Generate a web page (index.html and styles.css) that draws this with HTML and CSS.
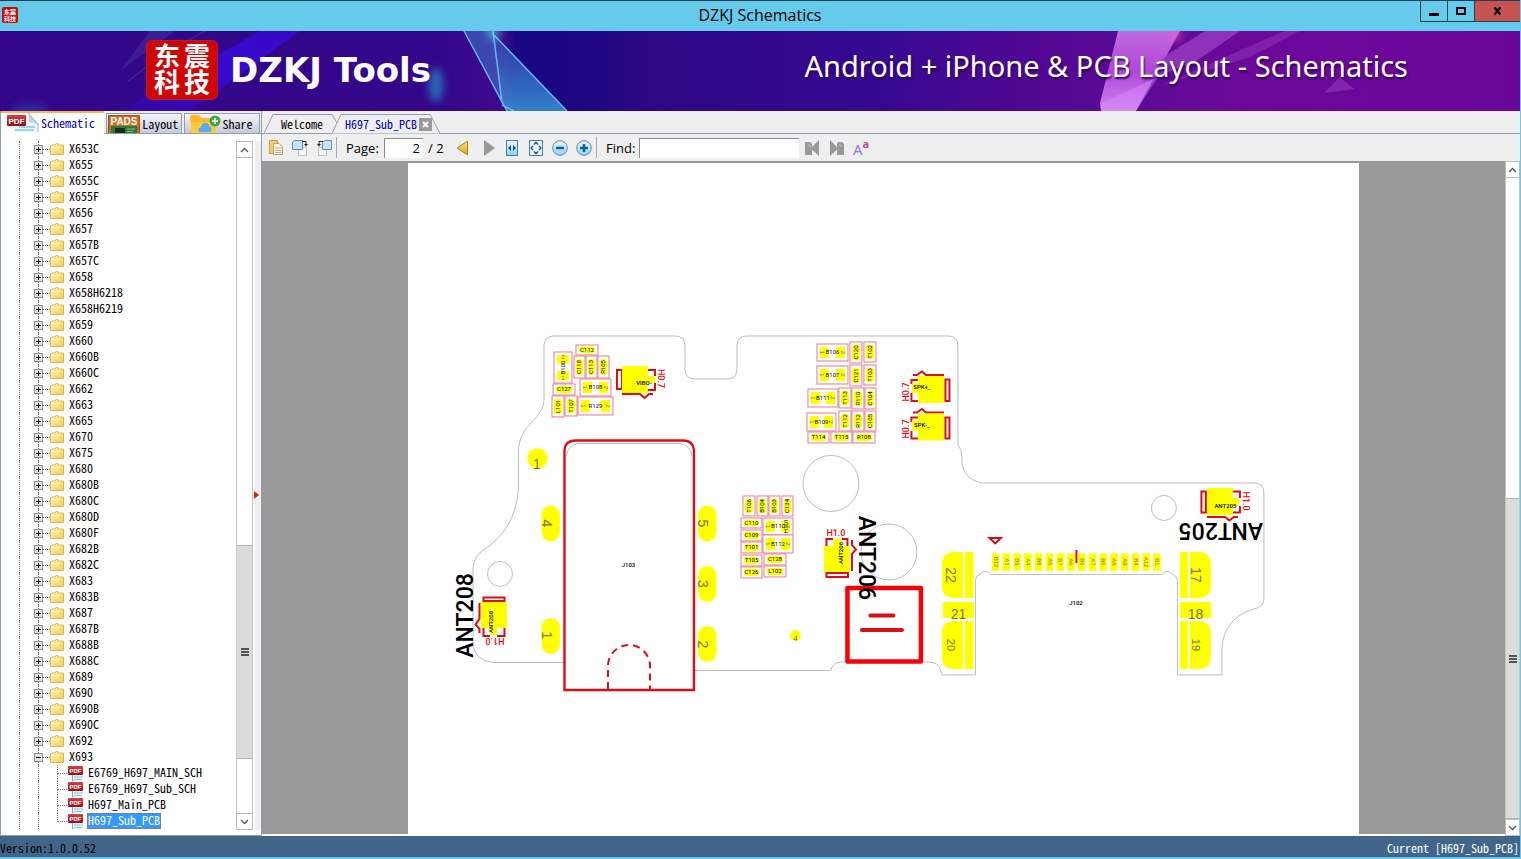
FILE: index.html
```html
<!DOCTYPE html>
<html lang="en">
<head>
<meta charset="utf-8">
<title>DZKJ Schematics</title>
<link rel="stylesheet" href="styles.css">
</head>
<body>
<svg class="defs" aria-hidden="true">
  <defs>
    <linearGradient id="gFolder" x1="0" y1="0" x2="1" y2="1"><stop offset="0" stop-color="#fff3b0"/><stop offset="1" stop-color="#f3cf5c"/></linearGradient>
    <linearGradient id="gGold" x1="0" y1="0" x2="0" y2="1"><stop offset="0" stop-color="#fbe38a"/><stop offset="1" stop-color="#d9a21c"/></linearGradient>
    <linearGradient id="gBlue" x1="0" y1="0" x2="0" y2="1"><stop offset="0" stop-color="#f2faff"/><stop offset="1" stop-color="#8fcdf5"/></linearGradient>
    <linearGradient id="gRed" x1="0" y1="0" x2="0" y2="1"><stop offset="0" stop-color="#d8404a"/><stop offset="1" stop-color="#9c0a14"/></linearGradient>
    <symbol id="folder" viewBox="0 0 14 12"><path d="M.5 11.500V2.500L5 1.500 6.500.5H8L8.500 2H13.500V11.500Z" fill="url(#gFolder)" stroke="#dcb64c"/><path d="M1.500 4.500H7L8.500 3.500" stroke="#fffbe0" fill="none"/></symbol>
    <symbol id="pdf" viewBox="0 0 16 16"><path d="M4 1H15V16H4Z" fill="#e8f4fc"/><path d="M6 12H15M6 14.500H14" stroke="#8ccbea"/><path d="M4.500 10V16" stroke="#9ab"/><rect x="0" y="1" width="15" height="9" rx="1" fill="url(#gRed)"/><text x="7.500" y="8" text-anchor="middle" class="pdf-word">PDF</text></symbol>
    <symbol id="logo" viewBox="0 0 72 60"><rect x=".5" y=".5" width="71" height="59" rx="5" fill="#cf0606" stroke="#b41a2c"/><text x="21" y="26" class="logo-word">东</text><text x="51" y="26" class="logo-word">震</text><text x="21" y="52" class="logo-word">科</text><text x="51" y="52" class="logo-word">技</text></symbol>
  </defs>
</svg>
<div class="window">
  <header class="titlebar">
    <svg class="app-icon" viewBox="0 0 16 16"><rect width="16" height="16" rx="2" fill="#c80a10"/><text x="8" y="7" text-anchor="middle" class="mini-word">东震</text><text x="8" y="14" text-anchor="middle" class="mini-word">科技</text></svg>
    <h1 class="title">DZKJ Schematics</h1>
    <div class="win-buttons">
      <button class="win-btn" aria-label="Minimize"><svg width="12" height="10"><path d="M1 8.500H11" stroke="#000" stroke-width="3"/></svg></button>
      <button class="win-btn" aria-label="Maximize"><svg width="12" height="10"><rect x="2" y="2" width="8" height="6" fill="none" stroke="#000" stroke-width="2"/></svg></button>
      <button class="win-btn close" aria-label="Close"><svg width="12" height="10"><path d="M2.500 1.500L8.500 8.500M8.500 1.500L2.500 8.500" stroke="#000" stroke-width="2.200"/></svg></button>
    </div>
  </header>

  <section class="banner">
    <svg class="banner-art" viewBox="0 0 1520 80" preserveAspectRatio="none" aria-hidden="true">
      <defs>
        <filter id="soft" x="-100%" y="-100%" width="300%" height="300%"><feGaussianBlur stdDeviation="4"/></filter>
        <linearGradient id="shard" x1="0" y1="0" x2="0" y2="1"><stop offset="0" stop-color="#3858c0" stop-opacity=".6"/><stop offset="1" stop-color="#38a0dc" stop-opacity=".8"/></linearGradient>
        <linearGradient id="pink" x1="0" y1="0" x2="0" y2="1"><stop offset="0" stop-color="#c06ae0"/><stop offset=".5" stop-color="#b148d6"/><stop offset="1" stop-color="#d080f4"/></linearGradient>
        <linearGradient id="beam" x1="1" y1="0" x2="0" y2="1"><stop offset="0" stop-color="#3a0ae0" stop-opacity=".7"/><stop offset=".5" stop-color="#3a08d8" stop-opacity=".9"/><stop offset="1" stop-color="#3a08c8" stop-opacity=".3"/></linearGradient>
      </defs>
      <path d="M260 0H300L190 80H120Z" fill="url(#beam)"/>
      <path d="M150 0H175L120 40Z" fill="#47309c" opacity=".5"/>
      <path d="M205 0L172 18M165 22L128 50" stroke="#5346a8" opacity=".6"/>
      <ellipse cx="436" cy="54" rx="7" ry="17" fill="#2688c4" opacity=".8" filter="url(#soft)"/>
      <ellipse cx="30" cy="80" rx="18" ry="7" fill="#2658b0" opacity=".5" filter="url(#soft)"/>
      <path d="M465 0H494L503 75Z" fill="#3f72c8" opacity=".6"/>
      <path d="M494 4L567 80H507L501 70Z" fill="url(#shard)"/>
      <path d="M464 0L507 80M493 0L502 72M494 4L567 80M502 74L514 80" stroke="#6ab4f4" stroke-width="1.500" fill="none"/>
      <circle cx="494" cy="2" r="6" fill="#5ff0e0" opacity=".7" filter="url(#soft)"/>
      <path d="M1118 0H1180L1136 80H1101L1100 72Z" fill="url(#pink)"/>
      <path d="M1101 72L1158 46L1136 80H1101Z" fill="#dc94f8" opacity=".4"/>
      <path d="M1205 0H1240L1196 30L1142 52L1163 26Z" fill="#a044c8" opacity=".7"/>
      <path d="M1284 0H1300L1250 26L1160 55Z" fill="#9138bc" opacity=".5"/>
      <path d="M1340 46L1354 58L1324 62Z" fill="#9138bc" opacity=".6"/>
      <circle cx="1176" cy="4" r="6" fill="#f060c0" opacity=".6" filter="url(#soft)"/>
    </svg>
    <div class="brand"><svg class="logo"><use href="#logo"/></svg><span class="brand-name">DZKJ Tools</span></div>
    <p class="tagline">Android + iPhone &amp; PCB Layout - Schematics</p>
  </section>

  <main class="main">
    <aside class="side">
      <div class="side-tabs" role="tablist">
        <button class="side-tab active" role="tab" aria-selected="true">
          <svg width="32" height="19" viewBox="0 0 32 19"><path d="M5 1H22L31 10V19H5Z" fill="#eef4f8"/><path d="M22 1V9L31 11Z" fill="#c6d4dc"/><path d="M21 0L31 11V19" fill="none" stroke="#8fb0c0"/><path d="M12 14H28M8 17H27" stroke="#9cd0ee" stroke-width="2"/><rect y="2" width="19" height="11" rx="1" fill="url(#gRed)"/><text x="9.500" y="10.500" text-anchor="middle" class="pdf-big">PDF</text></svg>Schematic</button>
        <button class="side-tab" role="tab">
          <svg width="32" height="18" viewBox="0 0 32 18"><rect x=".5" y=".5" width="31" height="19" fill="#d2691e" stroke="#8a5a20"/><rect x="3" y="11" width="26" height="8" fill="#2f7a34"/><rect x="7" y="13" width="10" height="6" fill="#1c2a22"/><path d="M19 14H27M19 16.500H25" stroke="#7dc070"/><text x="16" y="10" text-anchor="middle" class="pads-word">PADS</text></svg>Layout</button>
        <button class="side-tab share" role="tab">
          <svg width="32" height="18" viewBox="0 0 32 18"><path d="M1 2Q1 0 3 0H10L13 3H25Q27 3 27 5V18H3Z" fill="#fdb924"/><path d="M0 18L3 7H28L27 18Z" fill="#ffcb3c"/><path d="M10 17Q8 13 12 12Q13 7 17 8Q20 8 20 11Q24 12 22 17Z" fill="#5aaaf0"/><circle cx="26" cy="6" r="5.500" fill="#3fa648"/><path d="M23 6H29M26 3V9" stroke="#fff" stroke-width="1.500"/></svg>Share</button>
      </div>
      <div class="tree-wrap">
        <ul class="tree" id="tree" role="tree" aria-label="Schematics"></ul>
        <div class="vscroll tree-scroll">
          <button class="sb" aria-label="Scroll tree up"><svg width="9" height="6"><path d="M1 5L4.500 1.500L8 5" fill="none" stroke="#555" stroke-width="1.300"/></svg></button>
          <div class="track"><div class="before-thumb"></div><div class="thumb"><i></i></div><div class="after-thumb"></div></div>
          <button class="sb" aria-label="Scroll tree down"><svg width="9" height="6"><path d="M1 1L4.500 4.500L8 1" fill="none" stroke="#555" stroke-width="1.300"/></svg></button>
        </div>
        <div class="splitter"><svg width="5" height="8"><path d="M0 0L5 4L0 8Z" fill="#e02010"/></svg></div>
      </div>
    </aside>

    <section class="doc">
      <div class="doc-tabs" role="tablist">
        <button class="doc-tab welcome" role="tab"><svg class="tab-edge" viewBox="0 0 78 20" preserveAspectRatio="none"><path d="M0 19.500L9 .5H68L73 9" /></svg>Welcome</button>
        <div class="doc-tab current"><svg class="tab-edge" viewBox="0 0 110 20" preserveAspectRatio="none"><path d="M0 19.500L9 .5H99L109 19.500" class="front"/></svg><button class="tab-label" role="tab" aria-selected="true">H697_Sub_PCB</button><button class="tab-close" aria-label="Close tab"><svg width="13" height="13"><path d="M4 4L9 9M9 4L4 9" stroke="#fff" stroke-width="2"/></svg></button></div>
      </div>
      <div class="toolbar">
        <button class="tool" aria-label="Copy"><svg width="16" height="16"><path d="M1.500.5H9.500V13.500H1.500Z" fill="#f1cd74" stroke="#d0a040"/><path d="M5.500 3.500H11L14.500 7V14.500H5.500Z" fill="#fff6dc" stroke="#c0a060"/><path d="M7 8H13M7 10.500H13M7 12.500H13" stroke="#a8a8a8"/></svg></button>
        <button class="tool" aria-label="Rotate right"><svg width="17" height="16"><rect x="6.500" y="7.500" width="8" height="8" fill="#f8f8f8" stroke="#c0c0c0"/><path d="M2.500.5H10.500V9.500H.5V2.500Z" fill="#c9e3f8" stroke="#6088a8"/><path d="M10 1.500H14V4" fill="none" stroke="#222"/><path d="M12 4H16L14 6.500Z" fill="#222"/></svg></button>
        <button class="tool" aria-label="Rotate left"><svg width="17" height="16"><rect x="2.500" y="7.500" width="8" height="8" fill="#f8f8f8" stroke="#c0c0c0"/><path d="M8.500.5H15.500V9.500H6.500V2.500Z" fill="#c9e3f8" stroke="#6088a8"/><path d="M7 1.500H3V4" fill="none" stroke="#222"/><path d="M1 4H5L3 6.500Z" fill="#222"/></svg></button>
        <span class="sep"></span>
        <label class="lbl page-lbl" for="page">Page:</label>
        <input class="field page-field" id="page" value="2">
        <span class="lbl total">/ 2</span>
        <button class="tool" aria-label="Previous page"><svg width="16" height="16"><path d="M11.500 1V15L1 8Z" fill="url(#gGold)" stroke="#b08420"/></svg></button>
        <button class="tool" aria-label="Next page"><svg width="16" height="16"><path d="M4 0V16L15 8Z" fill="#999"/></svg></button>
        <button class="tool" aria-label="Fit width"><svg width="16" height="16"><rect x="2.500" y=".5" width="11" height="15" fill="url(#gBlue)" stroke="#4a7eb0"/><path d="M7 5V11L4 8ZM9 5V11L12 8Z" fill="#17508c"/></svg></button>
        <button class="tool" aria-label="Fit page"><svg width="16" height="16"><rect x="1.500" y=".5" width="13" height="15" fill="#e4f3fd" stroke="#4a7eb0"/><path d="M6 4.500L8 2.500L10 4.500M6 11.500L8 13.500L10 11.500M5 6L3 8L5 10M11 6L13 8L11 10" fill="none" stroke="#17508c" stroke-width="1.300"/></svg></button>
        <button class="tool" aria-label="Zoom out"><svg width="16" height="16"><circle cx="8" cy="8" r="7.300" fill="url(#gBlue)" stroke="#5a8fb8"/><path d="M4 8H12" stroke="#10609c" stroke-width="2.500"/></svg></button>
        <button class="tool" aria-label="Zoom in"><svg width="16" height="16"><circle cx="8" cy="8" r="7.300" fill="url(#gBlue)" stroke="#5a8fb8"/><path d="M4 8H12M8 4V12" stroke="#10609c" stroke-width="2.500"/></svg></button>
        <span class="sep"></span>
        <label class="lbl find-lbl" for="find">Find:</label>
        <input class="field find-field" id="find">
        <button class="tool" aria-label="Find previous"><svg width="16" height="16"><path d="M1 2H6L8 4V7L15 0V16L8 9.500V15H1Z" fill="#999"/><path d="M3.500 5H6V7" stroke="#bbb" fill="none"/></svg></button>
        <button class="tool" aria-label="Find next"><svg width="16" height="16"><path d="M16 4L14 2H10L9 4V7L2 0V16L9 9.500V15H16Z" fill="#999"/><path d="M11 5H13V7" stroke="#bbb" fill="none"/></svg></button>
        <button class="tool match-case" aria-label="Match case"><span class="case-a">A</span><sup class="case-b">a</sup></button>
      </div>
      <div class="viewer">
        <div class="canvas">
          <div class="page">
            <svg class="board" viewBox="408 163 951 671" preserveAspectRatio="xMidYMin meet" role="img" aria-label="H697 sub board layout">
              <g class="outline">
                <path d="M544 346Q544 336 554 336H675Q685 336 685 346V369Q685 379 695 379H727Q737 379 737 369V346Q737 336 747 336H948Q958 336 958 346V445Q962 449 962 457V463Q964 480 982 483H1254Q1264 483 1264 493V599Q1264 607 1254 609Q1224 618 1222 648V675H1177.500V580Q1177 576 1172 573.500Q1167 569 1162 574.500H991Q986 569 981 573.500Q976 576 975.500 580V675H941.500Q941 662 929 662H841Q832 663 831 670.500H695"/>
                <path d="M564 662.500H492Q475 660 473 645V568Q474 557 482 551Q516 530 518.500 488V448Q520 434 532 422Q544 410 544 400V346"/>
                <path d="M566.500 456Q568 445 578 443.500H680Q690 445 692 456"/>
                <circle cx="500" cy="574" r="12.500"/><circle cx="831" cy="483.500" r="28"/><circle cx="889" cy="552" r="28"/><circle cx="1164" cy="508" r="12.500"/>
              </g>
              <g class="pad">
                <circle cx="537.500" cy="458.500" r="10.300"/>
                <rect x="541.500" y="505.500" width="18.500" height="36" rx="9.250"/><rect x="541.500" y="618" width="18.500" height="36" rx="9.250"/>
                <rect x="698" y="505.500" width="18.500" height="36" rx="9.250"/><rect x="698" y="566" width="18.500" height="36" rx="9.250"/><rect x="698" y="626" width="18.500" height="36" rx="9.250"/>
                <circle cx="795.500" cy="635.500" r="5.500"/>
                <path d="M963 552V598H953Q942 597 942 586V564Q942 553 953 552ZM965 552H973.500V598H965ZM943 602H974V618H943ZM963 621V669H953Q942 668 942 657V633Q942 622 953 621ZM965 621H973.500V669H965Z"/>
                <path d="M1190 552V598H1200Q1211 597 1211 586V564Q1211 553 1200 552ZM1180 552H1188V598H1180ZM1180 602H1211V618H1180ZM1190 621V669H1200Q1211 668 1211 657V633Q1211 622 1200 621ZM1180 621H1188V669H1180Z"/>
              </g>
              <g class="pin-no">
                <text x="537" y="469">1</text>
                <text transform="translate(542 523.500) rotate(90)">4</text><text transform="translate(542 635.500) rotate(90)">1</text>
                <text transform="translate(698 523.500) rotate(90)">5</text><text transform="translate(698 584)  rotate(90)">3</text><text transform="translate(698 644.500) rotate(90)">2</text>
                <text transform="translate(946 575) rotate(90)">22</text><text x="958.500" y="619">21</text><text transform="translate(947 645) rotate(90)" class="small">20</text>
                <text transform="translate(1191 575) rotate(90)">17</text><text x="1195.500" y="619">18</text><text transform="translate(1192 645) rotate(90)" class="small">19</text>
                <text x="795.500" y="641" class="tiny">4</text>
              </g>
              <g class="red">
                <path d="M564.500 690V450Q565 441 575 440.500H684Q693 441 694 450V690Z" stroke-width="2.400"/>
                <path d="M608 689V666A21 21 0 0 1 650 666V689" stroke-width="2" stroke-dasharray="7 5"/>
                <rect x="847.500" y="588" width="73.500" height="73.500" class="bright" stroke-width="4.500" stroke-linejoin="round"/>
                <path d="M870.500 615.500H893.500M862 630H902" stroke-width="4" stroke-linecap="round"/>
                <path d="M989.500 538H1001L995.300 543.500Z"/>
                <path d="M617 370H622V389H617ZM648 370H655V376M648 390H655V383M622 394H640L644.500 398L649 394H653"/>
                <path d="M945.500 379.500H949.500V401H945.500ZM918 380H911.500V384M918 401H911.500V393M913 375H917L922 371.500L926 375H944"/>
                <path d="M945.500 417.500H949.500V438.500H945.500ZM918 417.500H911.500V422M918 438.500H911.500V431M913 412.500H917L922 409L926 412.500H944"/>
                <path d="M483.500 597.500H504.500V601H483.500ZM483.500 628V636H490M504.500 628V636H497M479.500 603V619L475.500 624.500L479.500 629V633"/>
                <path d="M826.500 546V539H833M847.500 546V539H842M826.500 573H848V577H826.500ZM852 540V545L856 549.500L852 554V571"/>
                <path d="M1201.500 491.500H1206V512.500H1201.500ZM1233 491.500H1240V498M1233 512.500H1240V506M1207 517H1225L1229.500 520.500L1234 517H1238"/>
              </g>
              <g class="pad">
                <path d="M622 366H648V376H655V383H648V393H622ZM918 376H944V403H918V393H912V383H918ZM918 413.500H944V440.500H918V430.500H912V420.500H918ZM481 602H507V628H497V635H490V628H481ZM824 546H833V539H842V546H850V572H824ZM1207 488H1233V498H1239V506H1233V515H1207Z"/>
              </g>
              <g class="ref">
                <text x="644" y="385">VIBO-</text><text x="922" y="389">SPK+_</text><text x="922" y="427">SPK-_</text>
                <text transform="translate(493.500 622) rotate(-90)">ANT208</text><text transform="translate(843 553) rotate(-90)">ANT206</text><text x="1225.500" y="508">ANT205</text>
                <text x="628.500" y="567.500">J103</text><text x="1076" y="605">J102</text>
              </g>
              <g class="height">
                <text transform="translate(658 378.500) rotate(90)">H0.7</text><text transform="translate(909 392) rotate(-90)">H0.7</text><text transform="translate(909 429) rotate(-90)">H0.7</text>
                <text transform="translate(495 638.500) rotate(180)">H1.0</text><text x="836" y="536">H1.0</text><text transform="translate(1243 501) rotate(90)">H1.0</text>
              </g>
              <g class="ant">
                <text transform="translate(473 615.500) rotate(-90)">ANT208</text><text transform="translate(859 558) rotate(90)">ANT206</text><text transform="translate(1221 523.500) rotate(180)">ANT205</text>
              </g>
              <g id="parts"></g>
              <g id="pins"></g>
            </svg>
          </div>
        </div>
        <div class="vscroll doc-scroll">
          <button class="sb" aria-label="Scroll page up"><svg width="9" height="6"><path d="M1 5L4.500 1.500L8 5" fill="none" stroke="#555" stroke-width="1.300"/></svg></button>
          <div class="track"><div class="before-thumb"></div><div class="thumb"><i></i></div></div>
          <button class="sb" aria-label="Scroll page down"><svg width="9" height="6"><path d="M1 1L4.500 4.500L8 1" fill="none" stroke="#555" stroke-width="1.300"/></svg></button>
        </div>
      </div>
    </section>
  </main>
  <footer class="status"><span>Version:1.0.0.52</span><span class="status-doc">Current [H697_Sub_PCB]</span></footer>
</div>
<script src="app.js"></script>
</body>
</html>
```
FILE: styles.css
```css
* { box-sizing: border-box; }
html, body { height: 100%; }
body { margin: 0; overflow: hidden; font-family: "Open Sans", "Noto Sans", sans-serif; font-size: 13px; color: #000; }
button { border: 0; padding: 0; margin: 0; background: none; font: inherit; font-feature-settings: inherit; color: inherit; }
svg { display: block; flex: none; }
.defs { position: absolute; width: 0; height: 0; }

.window { height: 100vh; display: flex; flex-direction: column; background: #efefef; border-right: 1px solid #66cbea; border-bottom: 2px solid #66cbea; }

.titlebar { flex: none; height: 31px; display: grid; grid-template-columns: 1fr auto 1fr; background: #66cbea; border-top: 1px solid #1d3c55; }
.app-icon { width: 16px; height: 16px; margin: 6px 2px; }
.mini-word { font: bold 6px "Noto Sans CJK SC", sans-serif; fill: #fff; }
.title { margin: 0; font-size: 16px; line-height: 29px; font-weight: 400; }
.win-buttons { display: flex; justify-self: end; height: 21px; border: solid #1f3f50; border-width: 0 0 1px 1px; }
.win-btn { width: 27px; display: flex; align-items: center; justify-content: center; border-right: 1px solid #1f3f50; }
.win-btn.close { width: 45px; background: #c75450; border-right: 0; }

.banner { flex: none; position: relative; height: 80px; display: flex; justify-content: space-between; align-items: center; padding: 0 112px 2px 146px; color: #fff;
  background: linear-gradient(90deg, #33068a 0, #33068a 29%, #3c0a8e 33%, #1a0680 34%, #1c0682 38%, #2c0886 43%, #360890 58%, #4c0892 66%, #5c0a96 74%, #6c089a 82%, #69069a 100%); }
.banner-art { position: absolute; inset: 0; width: 100%; height: 100%; }
.brand { position: relative; display: flex; align-items: center; gap: 12px; }
.logo { width: 72px; height: 60px; }
.logo-word { font: bold 26px "Noto Sans CJK SC", sans-serif; fill: #fff; text-anchor: middle; }
.brand-name { font: bold 34px/40px "DejaVu Sans", sans-serif; }
.tagline { position: relative; margin: 0 0 8px; font-family: "Noto Sans", sans-serif; font-size: 29px; line-height: 36px; font-weight: 400; text-shadow: 1px 2px 2px #2a0450; white-space: nowrap; }

.main { flex: 1; min-height: 0; display: flex; }
.side { flex: none; width: 262px; display: flex; flex-direction: column; border-left: 1px solid #8ba0b0; border-right: 1px solid #8ba0b0; }
.side-tabs, .doc-tabs, .tree, .status { font-family: "Noto Sans CJK SC", monospace; font-size: 12px; font-feature-settings: "hwid"; }
.side-tabs { flex: none; height: 23px; display: flex; align-items: flex-end; gap: 2px; border-bottom: 1px solid #8ba0b0; padding-right: 1px; }
.side-tab { flex: 77 1 0; height: 20px; display: flex; align-items: center; gap: 2px; padding: 0 1px; border: 1px solid #8ba0b0; border-bottom: 0; background: linear-gradient(#f4f4f8, #c8c8de); white-space: nowrap; overflow: hidden; }
.side-tab.share { flex-grow: 75; padding-left: 4px; }
.side-tab.active { flex: 103 1 0; height: 23px; margin-bottom: -1px; padding: 0 2px 2px 6px; border: 0; border-top: 2px solid #ffb347; background: #fff; color: #0000c0; }

.tree-wrap { flex: 1; min-height: 0; display: flex; padding: 7px 0 5px; background: #fff; border-bottom: 1px solid #8ba0b0; }
.tree { flex: 1; min-width: 0; margin: -4px 0 0; padding: 4px 0 0 18px; list-style: none; line-height: 16px; overflow: hidden; }
.branch { border-left: 1px dotted #777; }
.node { display: flex; align-items: center; height: 16px; padding-left: 14px; position: relative; white-space: nowrap; }
.node::before { content: ""; position: absolute; left: 18px; top: 0; bottom: 0; border-left: 1px dotted #777; }
.expander { position: relative; width: 9px; height: 9px; border: 1px solid #8c8c8c; background: #e4e4e4; }
.expander::before { content: ""; position: absolute; left: 1px; right: 1px; top: 3px; height: 1px; background: #000; }
.expander.closed::after { content: ""; position: absolute; top: 1px; bottom: 1px; left: 3px; width: 1px; background: #000; }
.dots { width: 7px; border-top: 1px dotted #777; }
.folder { width: 14px; height: 12px; margin: 0 4px 1px 0; }
.file { display: flex; align-items: center; height: 16px; padding-left: 48px; position: relative; white-space: nowrap; }
.file::before { content: ""; position: absolute; left: 18px; top: 0; bottom: 0; border-left: 1px dotted #777; }
.file::after { content: ""; position: absolute; left: 37px; top: 0; width: 11px; height: 8px; border: dotted #777; border-width: 0 0 1px 1px; }
.file:not(.last) .stem { position: absolute; left: 37px; top: 8px; height: 8px; border-left: 1px dotted #777; }
.pdf { width: 16px; height: 16px; margin-right: 3px; }
.pdf-word { font: bold 6px "Liberation Sans", sans-serif; fill: #fff; }
.pdf-big { font: bold 8px "Liberation Sans", sans-serif; fill: #fff; }
.pads-word { font: bold 10px "Liberation Sans", sans-serif; fill: #fff; }
.name { padding: 0 1px; height: 16px; line-height: 14px; }
.name.selected { background: #3399ff; color: #fff; outline: 1px dotted #b06a10; outline-offset: -1px; }

.vscroll { flex: none; display: flex; flex-direction: column; background: #fff; }
.sb { flex: none; height: 17px; display: flex; align-items: center; justify-content: center; background: #fff; border: 1px solid #bcbcbc; }
.track { flex: 1; min-height: 0; display: flex; flex-direction: column; border: solid #c4c4c4; border-width: 0 1px; }
.thumb { background: #dcdcdc; border: solid #b0b0b0; border-width: 1px 0; display: flex; align-items: center; justify-content: center; }
.thumb i { width: 8px; height: 8px; background: repeating-linear-gradient(#555 0 2px, transparent 2px 3px); }
.tree-scroll { width: 17px; }
.tree-scroll .before-thumb { flex: 389 0 0; }
.tree-scroll .thumb { flex: 213 0 0; }
.tree-scroll .after-thumb { flex: 54 0 0; }
.splitter { flex: none; width: 8px; display: flex; align-items: center; padding: 18px 0 0 1px; background: linear-gradient(90deg, #fff 0 2px, #efefef 2px); }

.doc { flex: 1; min-width: 0; display: flex; flex-direction: column; }
.doc-tabs { flex: none; height: 23px; display: flex; align-items: flex-end; padding-left: 2px; border-bottom: 1px solid #8ba0b0; }
.doc-tab { position: relative; height: 20px; display: flex; align-items: center; margin-bottom: -1px; padding-bottom: 2px; isolation: isolate; }
.doc-tab.welcome { width: 68px; padding-left: 17px; }
.doc-tab.current { padding: 0 9px 0 13px; gap: 2px; color: #0000c0; }
.tab-label { padding-bottom: 2px; }
.tab-edge { position: absolute; left: 0; top: 0; height: 100%; width: 100%; z-index: -1; }
.tab-edge path { fill: #efefef; stroke: #8ba0b0; }
.welcome .tab-edge { width: 78px; }
.tab-close { width: 13px; height: 13px; background: #9a9a9a; }

.toolbar { flex: none; height: 27px; display: flex; align-items: center; padding: 0 6px; }
.tool { width: 24px; height: 22px; display: flex; align-items: center; }
.sep { width: 1px; height: 21px; background: #a8a8a8; margin-right: 9px; }
.toolbar .tool + .sep { margin-left: -4px; }
.lbl { line-height: 20px; }
.page-lbl { width: 38px; }
.field { height: 20px; border: solid #8a8a8a; border-width: 1px 0 0 1px; background: #fff; font: inherit; outline: 0; }
.page-field { width: 39px; padding: 0 3px; text-align: right; }
.total { width: 33px; padding-left: 5px; }
.find-lbl { width: 33px; }
.find-field { width: 160px; margin-right: 5px; }
.match-case { align-items: flex-start; padding-left: 1px; }
.case-a { font: 15px/24px "Open Sans", sans-serif; color: #8878f0; }
.case-b { font: bold 11px/14px "Open Sans", sans-serif; color: #c04090; }

.viewer { flex: 1; min-height: 0; display: flex; }
.canvas { flex: 1; min-width: 0; display: flex; justify-content: center; background: #999; padding-top: 2px; border-bottom: 2px solid #fff; }
.page { width: 76.5%; background: #fff; }
.board { width: 100%; height: 100%; }
.doc-scroll { width: 15px; }
.doc-scroll .before-thumb { flex: 321 0 0; }
.doc-scroll .thumb { flex: 320 0 0; }

.outline { fill: none; stroke: #bdbdbd; stroke-width: 1; }
.pad { fill: #ff0; }
.red { fill: none; stroke: #dc0c14; stroke-width: 2; }
.red .bright { stroke: #f80008; }
.pin-no { font: 14px "Liberation Sans", sans-serif; fill: #76762c; text-anchor: middle; }
.pin-no .small { font-size: 11px; }
.pin-no .tiny { font-size: 8px; }
.ref { font: 500 6px Roboto, sans-serif; fill: #000; text-anchor: middle; }
.height { font: 500 9px Roboto, sans-serif; fill: #dc0c14; text-anchor: middle; }
.ant { font: 500 23px Roboto, sans-serif; fill: #000; text-anchor: middle; }
.part-box { fill: #fff; stroke: #ee7890; stroke-width: 1; }
.part-pad { fill: #ff0; }
.part-no { font: 6px Roboto, sans-serif; fill: #000; text-anchor: middle; }
.pin-name { font: 6px "Liberation Sans", sans-serif; fill: #77770a; text-anchor: middle; }

.status { flex: none; height: 21px; display: flex; justify-content: space-between; align-items: center; padding: 3px 1px 0 0; background: #426689; line-height: 16px; }
.status-doc { color: #fff; }
```
FILE: app.js
```js
const folders = ["X653C", "X655", "X655C", "X655F", "X656", "X657", "X657B", "X657C", "X658", "X658H6218", "X658H6219",
  "X659", "X660", "X660B", "X660C", "X662", "X663", "X665", "X670", "X675", "X680", "X680B", "X680C", "X680D", "X680F",
  "X682B", "X682C", "X683", "X683B", "X687", "X687B", "X688B", "X688C", "X689", "X690", "X690B", "X690C", "X692", "X693"];
const files = ["E6769_H697_MAIN_SCH", "E6769_H697_Sub_SCH", "H697_Main_PCB", "H697_Sub_PCB"];
const openFolder = "X693";
const selectedFile = "H697_Sub_PCB";

const folderRow = (name) => {
  const open = name === openFolder;
  return `<li class="branch" role="treeitem" aria-expanded="${open}"><div class="node"><button class="expander ${open ? "" : "closed"}" aria-label="Toggle ${name}"></button><span class="dots"></span><svg class="folder"><use href="#folder"/></svg><span class="name">${name}</span></div></li>`;
};
const fileRow = (name, i) =>
  `<li class="branch" role="treeitem"><div class="file ${i === files.length - 1 ? "last" : ""}"><span class="stem"></span><svg class="pdf"><use href="#pdf"/></svg><span class="name ${name === selectedFile ? "selected" : ""}">${name}</span></div></li>`;
document.getElementById("tree").innerHTML = folders.map(folderRow).join("") + files.map(fileRow).join("");

// left, top, right, bottom, label; tall parts carry their label upright
const parts = [
  [576, 345, 598, 355, "C112"], [554, 352, 572, 383, "B100", 2], [574, 356, 585, 378, "C118"], [586, 356, 597, 378, "C113"],
  [598, 356, 609, 378, "R105"], [553, 384, 575, 395, "C127"], [580, 379, 611, 396, "B108", 2], [552, 396, 564, 417, "L101"],
  [565, 396, 577, 416, "T107"], [578, 397, 613, 415, "R129", 2],
  [817, 344, 848, 361, "B106", 2], [850, 342, 862, 363, "C120"], [864, 342, 876, 362, "T102"],
  [817, 366, 848, 384, "B107", 2], [850, 365, 862, 386, "C121"], [864, 365, 876, 385, "T103"],
  [808, 389, 838, 407, "B111", 2], [839, 388, 851, 408, "T113"], [852, 388, 864, 409, "R110"], [865, 388, 876, 409, "C104"],
  [807, 413, 836, 431, "B109", 2], [839, 411, 851, 431, "T112"], [852, 411, 864, 431, "R112"], [865, 411, 876, 431, "C105"],
  [808, 432, 829, 443, "T114"], [831, 432, 852, 443, "T115"], [853, 432, 875, 443, "R108"],
  [743, 496, 755, 516, "T106"], [757, 496, 768, 516, "B104"], [769, 496, 780, 516, "B103"], [782, 496, 793, 516, "C134"],
  [741, 518, 762, 528, "C110"], [741, 530, 762, 541, "C109"], [741, 542, 762, 553, "T101"], [741, 555, 762, 566, "T105"],
  [741, 567, 762, 578, "C126"], [763, 518, 793, 535, "B110", 2], [763, 535, 793, 553, "B112", 2],
  [764, 554, 786, 565, "C128"], [764, 566, 786, 577, "L102"]
];
const partShape = ([x1, y1, x2, y2, label, pads]) => {
  const w = x2 - x1, h = y2 - y1, cx = x1 + w / 2, cy = y1 + h / 2;
  const long = Math.max(w, h), short = Math.min(w, h);
  const turn = h > w ? -90 : 0;
  const fill = pads
    ? `<rect class="part-pad" x="${-long / 2 + 3}" y="${-short / 2 + 3}" width="9" height="${short - 6}"/><rect class="part-pad" x="${long / 2 - 12}" y="${-short / 2 + 3}" width="9" height="${short - 6}"/>`
    : `<rect class="part-pad" x="${-long / 2 + 3}" y="${-short / 2 + 2}" width="${long - 6}" height="${short - 4}" rx="3"/>`;
  const marks = pads ? `<text class="pin-name" transform="translate(${-long / 2 + 3} 0) rotate(90)">1</text><text class="pin-name" transform="translate(${long / 2 - 7} 0) rotate(90)">2</text>` : "";
  return `<g transform="translate(${cx} ${cy}) rotate(${turn})"><rect class="part-box" x="${-long / 2}" y="${-short / 2}" width="${long}" height="${short}"/>${fill}${marks}<text class="part-no" y="2">${label}</text></g>`;
};
document.getElementById("parts").innerHTML = parts.map(partShape).join("") +
  `<text class="part-no" transform="translate(788 526) rotate(-90)">H101</text>`;

const pins = ["B12", "A1", "B9", "A4", "B8", "A5", "B7", "A6", "B6", "A7", "B5", "A8", "A9", "B4", "A12", "B1"];
document.getElementById("pins").innerHTML = pins.map((name, i) => {
  const x = 992 + i * 10.75;
  return `<rect class="part-pad" x="${x}" y="553.5" width="7.5" height="17.5"/><text class="pin-name" transform="translate(${x + 2} 562) rotate(90)">${name}</text>`;
}).join("") + `<path d="M1076.5 550V563" stroke="#dc0c14" stroke-width="2"/>`;
```
